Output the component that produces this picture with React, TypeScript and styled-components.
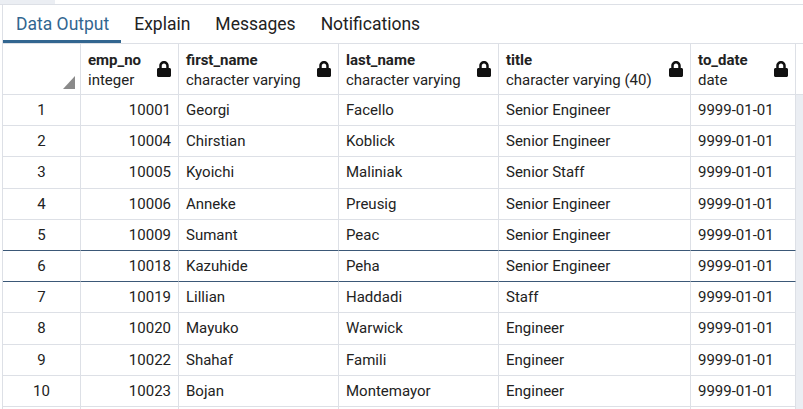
import styled, { createGlobalStyle } from "styled-components"
import { FaLock } from "react-icons/fa"

const GlobalStyle = createGlobalStyle`
    html, body {
        margin: 0;
        padding: 0;
        background: #ffffff;
        overflow: hidden;
    }
    * {
        box-sizing: border-box;
    }
`

const columns = [
    { key: "emp_no", type: "integer", align: "right" },
    { key: "first_name", type: "character varying", align: "left" },
    { key: "last_name", type: "character varying", align: "left" },
    { key: "title", type: "character varying (40)", align: "left" },
    { key: "to_date", type: "date", align: "left" },
]

const rows = [
    ["10001", "Georgi", "Facello", "Senior Engineer", "9999-01-01"],
    ["10004", "Chirstian", "Koblick", "Senior Engineer", "9999-01-01"],
    ["10005", "Kyoichi", "Maliniak", "Senior Staff", "9999-01-01"],
    ["10006", "Anneke", "Preusig", "Senior Engineer", "9999-01-01"],
    ["10009", "Sumant", "Peac", "Senior Engineer", "9999-01-01"],
    ["10018", "Kazuhide", "Peha", "Senior Engineer", "9999-01-01"],
    ["10019", "Lillian", "Haddadi", "Staff", "9999-01-01"],
    ["10020", "Mayuko", "Warwick", "Engineer", "9999-01-01"],
    ["10022", "Shahaf", "Famili", "Engineer", "9999-01-01"],
    ["10023", "Bojan", "Montemayor", "Engineer", "9999-01-01"],
]

const tabs = ["Data Output", "Explain", "Messages", "Notifications"]

const selectedRow = 5

export default function App() {
    return (
        <Page>
            <GlobalStyle />
            <TopStrip>
                <TopBlock />
            </TopStrip>
            <Panel>
                <TabBar>
                    {tabs.map((t, i) => (
                        <Tab key={t} $active={i === 0}>{t}</Tab>
                    ))}
                </TabBar>
                <Grid>
                    <HeadCorner>
                        <Triangle />
                    </HeadCorner>
                    {columns.map(c => (
                        <HeadCell key={c.key}>
                            <HeadText>
                                <ColName>{c.key}</ColName>
                                <ColType>{c.type}</ColType>
                            </HeadText>
                            <LockWrap><FaLock size={16} /></LockWrap>
                        </HeadCell>
                    ))}
                    <HeadFiller />
                    {rows.map((r, i) => {
                        const dark = i === selectedRow || i === selectedRow - 1
                        return [
                            <NumCell key={`n${i}`} $dark={dark}>{i + 1}</NumCell>,
                            ...r.map((v, j) => (
                                <Cell key={`c${i}-${j}`} $dark={dark} $right={columns[j].align === "right"}>{v}</Cell>
                            )),
                            <Filler key={`f${i}`} />,
                        ]
                    })}
                    {/* next row, scrolled just past the bottom edge */}
                    <NumCell />
                    {columns.map(c => <Cell key={`e-${c.key}`} />)}
                    <Filler />
                </Grid>
            </Panel>
        </Page>
    )
}

const Page = styled.div`
    width: 803px;
    height: 409px;
    overflow: hidden;
    font-family: Roboto, "Liberation Sans", sans-serif;
    color: #222222;
`

const TopStrip = styled.div`
    height: 5px;
    border-bottom: 1px solid #dde0e6;
`

const TopBlock = styled.div`
    width: 55px;
    height: 4px;
    background: #ebeef3;
`

const Panel = styled.div`
    margin-left: 2px;
    border-left: 1px solid #dde0e6;
`

const TabBar = styled.div`
    display: flex;
    height: 39px;
    border-bottom: 1px solid #dde0e6;
`

const Tab = styled.div<{ $active?: boolean }>`
    display: flex;
    align-items: center;
    padding: 3px 12px 0 13px;
    height: 38px;
    font-size: 17.5px;
    color: ${p => p.$active ? "#326690" : "#222222"};
    border-bottom: 3px solid ${p => p.$active ? "#326690" : "transparent"};
`

const Grid = styled.div`
    display: grid;
    grid-template-columns: 78px 98px 160px 160px 192px 105px 1fr;
    grid-template-rows: 51px;
    grid-auto-rows: 31.2px;
`

const HeadCorner = styled.div`
    display: flex;
    align-items: flex-end;
    justify-content: flex-end;
    padding: 0 5px 5px 0;
    border-right: 1px solid #dde0e6;
    border-bottom: 1px solid #dde0e6;
`

const Triangle = styled.div`
    width: 0;
    height: 0;
    border-left: 12px solid transparent;
    border-bottom: 13px solid #8a8a8a;
`

const HeadCell = styled.div`
    display: flex;
    align-items: center;
    justify-content: space-between;
    padding: 0 6px 0 7px;
    border-right: 1px solid #dde0e6;
    border-bottom: 1px solid #dde0e6;
`

const HeadText = styled.div`
    display: flex;
    flex-direction: column;
    padding-top: 2px;
    font-size: 15px;
    line-height: 20px;
    white-space: nowrap;
`

const ColName = styled.span`
    font-weight: 700;
`

const ColType = styled.span`
    font-weight: 400;
`

const LockWrap = styled.span`
    display: flex;
    color: #111111;
    margin-bottom: 1px;
`

const HeadFiller = styled.div`
    border-bottom: 1px solid #dde0e6;
`

const NumCell = styled.div<{ $dark?: boolean }>`
    display: flex;
    align-items: center;
    justify-content: center;
    font-size: 15px;
    border-right: 1px solid #dde0e6;
    border-bottom: 1px solid ${p => p.$dark ? "#3b5877" : "#dde0e6"};
`

const Cell = styled.div<{ $dark?: boolean, $right?: boolean }>`
    display: flex;
    align-items: center;
    justify-content: ${p => p.$right ? "flex-end" : "flex-start"};
    padding: 0 7px;
    font-size: 15px;
    white-space: nowrap;
    overflow: hidden;
    border-right: 1px solid #dde0e6;
    border-bottom: 1px solid ${p => p.$dark ? "#3b5877" : "#dde0e6"};
`

const Filler = styled.div`
    background: #ebeef3;
`
